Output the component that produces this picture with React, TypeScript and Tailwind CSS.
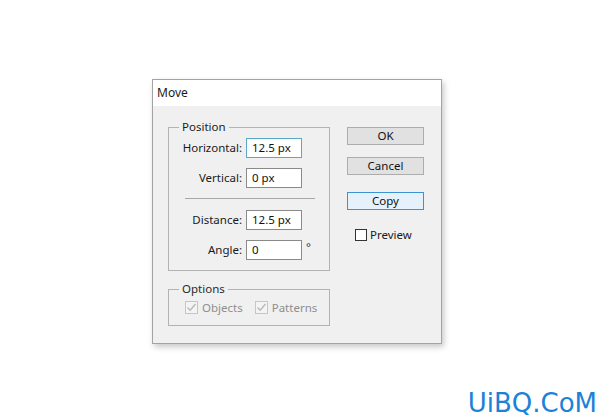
import React from 'react';

const FIELDS_TOP = [
  { label: 'Horizontal:', value: '12.5 px', focused: true },
  { label: 'Vertical:', value: '0 px', focused: false },
];

const FIELDS_BOTTOM = [
  { label: 'Distance:', value: '12.5 px', degree: false },
  { label: 'Angle:', value: '0', degree: true },
];

function Field({ label, value, focused, degree }: { label: string; value: string; focused?: boolean; degree?: boolean }) {
  return (
    <div className="flex items-center h-[20px]">
      <span className="w-[77px] text-right pr-[4px] text-[#1a1a1a]">{label}</span>
      <div
        className={`w-[56px] h-[20px] bg-white pl-[5px] flex items-center text-[#111] border ${
          focused ? 'border-[#57a9c7]' : 'border-[#8a8a8a]'
        }`}
      >
        {value}
      </div>
      {degree && <span className="ml-[4px] self-start leading-[14px] text-[#333]">°</span>}
    </div>
  );
}

function DisabledCheck({ label }: { label: string }) {
  return (
    <div className="flex items-center gap-[4px] text-[#8e8e8e]">
      <span className="w-[13px] h-[13px] border border-[#c6c6c6] bg-[#f4f4f4] flex items-center justify-center">
        <svg width="11" height="11" viewBox="0 0 11 11">
          <path d="M1.5 5.5 L4.2 8.3 L9.5 2" fill="none" stroke="#b9b9b9" strokeWidth="1.4" />
        </svg>
      </span>
      <span>{label}</span>
    </div>
  );
}

function Button({ children, primary }: { children: React.ReactNode; primary?: boolean }) {
  return (
    <button
      className={`w-[77px] h-[18px] flex items-center justify-center leading-none text-[#111] border ${
        primary ? 'bg-[#e5f1fb] border-[#3b93d3]' : 'bg-[#e1e1e1] border-[#adadad]'
      }`}
    >
      {children}
    </button>
  );
}

export default function App() {
  return (
    <div className="relative w-[600px] h-[419px] bg-white overflow-hidden font-['Noto_Sans',sans-serif] text-[11.5px]">
      <div className="pt-[79px] pl-[152px]">
        <div className="w-[290px] h-[265px] flex flex-col border border-[#a3a3a3] shadow-[2px_3px_6px_rgba(0,0,0,0.22)]">
          <div className="h-[26px] bg-white flex items-center pl-[4px] text-[12px] text-[#1a1a1a]">Move</div>
          <div className="flex-1 bg-[#f0f0f0] flex pl-[15px] pt-[13px]">
            <div className="w-[162px]">
              <fieldset className="h-[152px] border border-[#b3b3b3] m-0 p-0">
                <legend className="ml-[10px] px-[3px] leading-[16px] text-[#1a1a1a]">Position</legend>
                <div className="pt-[3px] flex flex-col">
                  <div className="flex flex-col gap-[10px]">
                    {FIELDS_TOP.map((f) => (
                      <Field key={f.label} label={f.label} value={f.value} focused={f.focused} />
                    ))}
                  </div>
                  <div className="mt-[10px] ml-[16px] w-[130px] h-px bg-[#a8a8a8]" />
                  <div className="mt-[11px] flex flex-col gap-[10px]">
                    {FIELDS_BOTTOM.map((f) => (
                      <Field key={f.label} label={f.label} value={f.value} degree={f.degree} />
                    ))}
                  </div>
                </div>
              </fieldset>
              <fieldset className="mt-[10px] h-[45px] border border-[#b3b3b3] m-0 p-0">
                <legend className="ml-[10px] px-[3px] leading-[16px] text-[#2a2a2a]">Options</legend>
                <div className="pt-[2px] pl-[16px] flex gap-[12px]">
                  <DisabledCheck label="Objects" />
                  <DisabledCheck label="Patterns" />
                </div>
              </fieldset>
            </div>
            <div className="ml-[17px] pt-[8px] flex flex-col">
              <Button>OK</Button>
              <div className="mt-[12px]">
                <Button>Cancel</Button>
              </div>
              <div className="mt-[17px]">
                <Button primary>Copy</Button>
              </div>
              <div className="mt-[16px] ml-[8px] flex items-center gap-[3px] text-[#1a1a1a]">
                <span className="w-[12px] h-[12px] border border-[#333] bg-white" />
                <span>Preview</span>
              </div>
            </div>
          </div>
        </div>
      </div>
      <div className="absolute right-[3px] bottom-[3px] font-['DejaVu_Sans',sans-serif] text-[26px] leading-none text-[#1b82d8]">
        UiBQ.CoM
      </div>
    </div>
  );
}
